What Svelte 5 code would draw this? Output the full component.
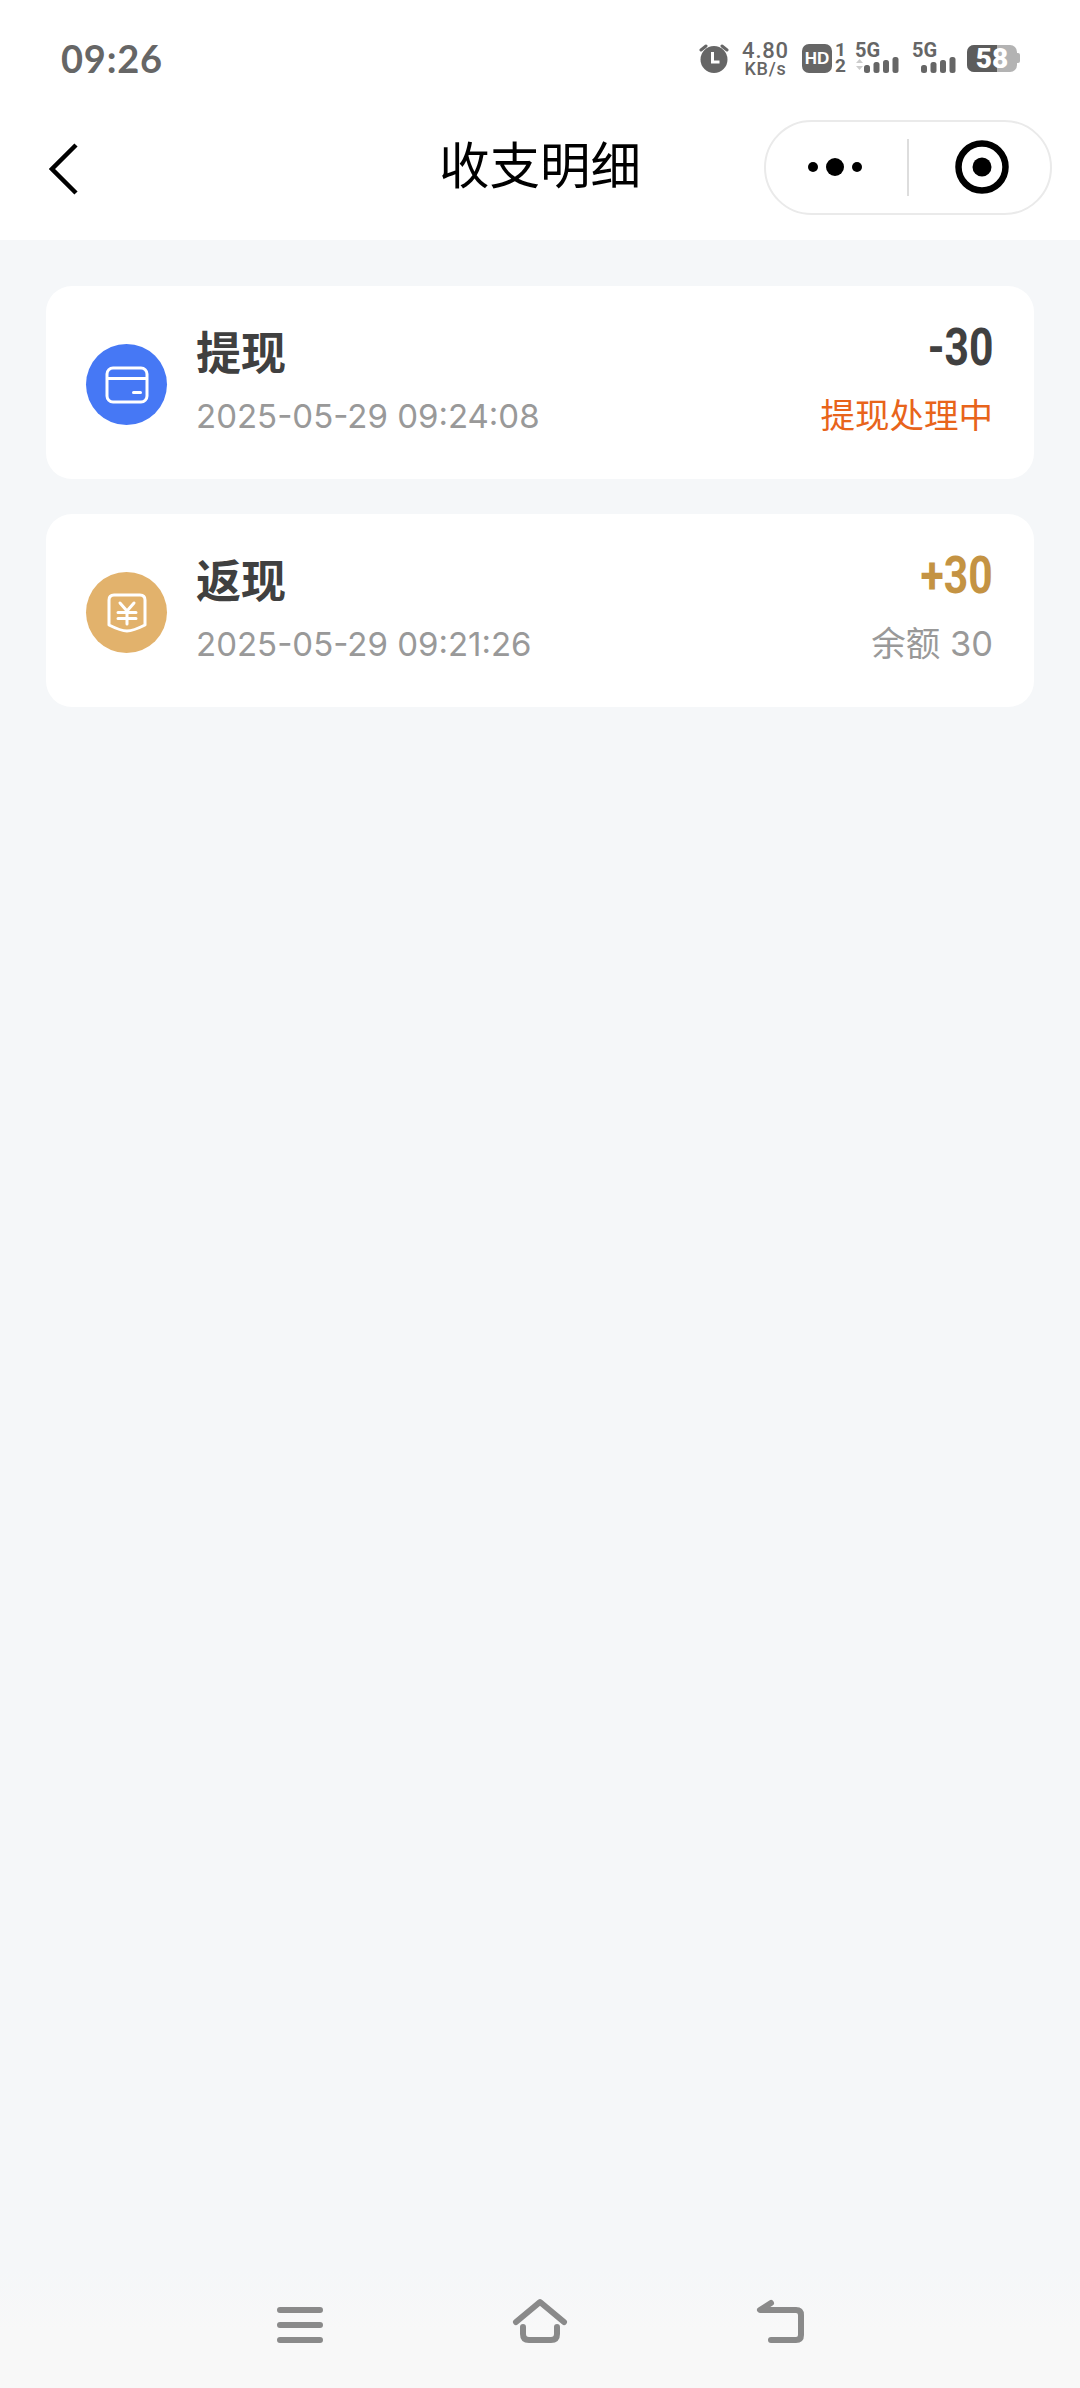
<script>
  const rows = [
    { kind: 'card', title: '提现', time: '2025-05-29 09:24:08', amount: '-30', note: '提现处理中' },
    { kind: 'cash', title: '返现', time: '2025-05-29 09:21:26', amount: '+30', note: '余额 30' },
  ];
  const sims = [0, 1];
</script>

<div class="page">
  <header class="top">
    <div class="status">
      <span class="clock">09:26</span>
      <div class="sys">
        <svg class="alarm" width="30" height="30" viewBox="0 0 30 30">
          <path d="M2 7l5-4M28 7l-5-4" stroke="#666" stroke-width="3" stroke-linecap="round"/>
          <circle cx="15" cy="16.500" r="13.500" fill="#666"/>
          <path d="M13.500 9v10h7" fill="none" stroke="#fff" stroke-width="3"/>
        </svg>
        <div class="speed"><span>4.80</span><span class="unit">KB/s</span></div>
        <div class="hd">HD</div>
        <div class="slots"><span>1</span><span>2</span></div>
        {#each sims as s}
          <div class="sim" class:second={s === 1}>
            <span>5G</span>
            <svg width="44" height="16" viewBox="0 0 44 16">
              {#if s === 0}
                <path d="M1 6l3.500-4 3.500 4zM1 9l3.500 4 3.500-4z" fill="#ccc"/>
              {/if}
              <g fill="#666">
                <rect x="9" y="8" width="6" height="8" rx="2.500"/>
                <rect x="18.500" y="5" width="6" height="11" rx="2.500"/>
                <rect x="28" y="3" width="6" height="13" rx="2.500"/>
                <rect x="37.500" y="0" width="6" height="16" rx="2.500"/>
              </g>
            </svg>
          </div>
        {/each}
        <div class="battery"><div class="cell"><i class="level"></i><b>58</b></div><i class="nub"></i></div>
      </div>
    </div>

    <nav class="bar">
      <svg class="back" width="30" height="54" viewBox="0 0 30 54">
        <path d="M27 3L3 27 27 51" fill="none" stroke="#000" stroke-width="4.500"/>
      </svg>
      <h1>收支明细</h1>
      <div class="capsule">
        <div class="more"><i></i><i class="big"></i><i></i></div>
        <div class="split"></div>
        <svg width="54" height="54" viewBox="0 0 54 54">
          <circle cx="27" cy="27" r="23.500" fill="none" stroke="#000" stroke-width="6.500"/>
          <circle cx="27" cy="27" r="9.500" fill="#000"/>
        </svg>
      </div>
    </nav>
  </header>

  <main class="list">
    {#each rows as r}
      <section class="row">
        <div class="badge {r.kind}">
          {#if r.kind === 'card'}
            <svg width="44" height="38" viewBox="0 0 44 38" fill="none" stroke="#fff" stroke-width="3">
              <rect x="2" y="2" width="40" height="34" rx="6"/>
              <path d="M2 12.500h40"/>
              <path d="M28.500 26.500h7" stroke-linecap="round"/>
            </svg>
          {:else}
            <svg width="40" height="40" viewBox="0 0 40 40" fill="none" stroke="#fff" stroke-width="3">
              <path d="M7 2H33Q38 2 38 7V32C30 36 25 38 20 38S10 36 2 32V7Q2 2 7 2z" stroke-linejoin="round"/>
              <path d="M13 10l7 8 7-8M11 19.500h18M11 25.500h18M20 18v13" stroke-linecap="round" stroke-linejoin="round"/>
            </svg>
          {/if}
        </div>
        <div class="info">
          <div class="name">{r.title}</div>
          <div class="time">{r.time}</div>
        </div>
        <div class="side">
          <div class="amount {r.kind}">{r.amount}</div>
          <div class="note {r.kind}">{r.note}</div>
        </div>
      </section>
    {/each}
  </main>

  <footer class="keys">
    <svg width="50" height="50" viewBox="0 0 50 50" fill="none" stroke="#8a8a8a" stroke-width="6" stroke-linecap="round">
      <path d="M5 13h40M5 28h40M5 43h40"/>
    </svg>
    <svg width="60" height="50" viewBox="0 0 60 50" fill="none" stroke="#8a8a8a" stroke-width="6" stroke-linecap="round" stroke-linejoin="round">
      <path d="M6 25L30 5l24 20"/>
      <path d="M13 30v7q0 6 6 6h22q6 0 6-6v-7"/>
    </svg>
    <svg width="52" height="50" viewBox="0 0 52 50" fill="none" stroke="#8a8a8a" stroke-width="6" stroke-linecap="round" stroke-linejoin="round">
      <path d="M17 6L6 13h36q5 0 5 5v20q0 5-5 5H17"/>
    </svg>
  </footer>
</div>

<style>
  :global(body){background:#f5f7f9}
  .page{height:2388px;display:flex;flex-direction:column;background:#f5f7f9;
    font-family:"Noto Sans","Noto Sans CJK SC",sans-serif;overflow:hidden}

  .top{background:#fff;height:240px;flex:none}
  .status{height:100px;padding:15px 60px 0 61px;box-sizing:border-box;display:flex;align-items:center;justify-content:space-between}
  .clock{font:700 38px/1 Lato,"Noto Sans",sans-serif;color:#666;letter-spacing:.8px}
  .sys{display:flex;align-items:center;color:#666;margin-top:1px}
  .alarm{margin-right:12px}
  .speed{display:flex;flex-direction:column;align-items:center;width:49px;font:500 22px/21px Roboto,sans-serif;letter-spacing:.8px}
  .speed .unit{font-size:18px;line-height:16px}
  .hd{margin-left:12px;width:30px;height:29px;border-radius:7px;background:#666;color:#fff;
    font:800 17px/29px "Liberation Sans",sans-serif;text-align:center}
  .slots{display:flex;flex-direction:column;margin-left:3px;font:700 19px/16px Roboto,sans-serif;width:9px}
  .sim{display:flex;flex-direction:column;margin-left:11px;width:44px}
  .sim.second{margin-left:13px}
  .sim span{font:700 20px/14px Roboto,sans-serif}
  .battery{margin-left:11px;display:flex;align-items:center}
  .cell{position:relative;width:50px;height:27px;border-radius:7px;background:#b3b3b3;
    text-align:center;color:#fff;font:700 28px/27px Roboto,sans-serif}
  .level{position:absolute;left:0;top:0;bottom:0;width:30px;background:#5c5c5c;border-radius:7px 0 0 7px}
  .cell b{position:relative}
  .nub{width:3px;height:10px;background:#b3b3b3;border-radius:0 2px 2px 0}

  .bar{height:140px;display:flex;align-items:center;position:relative;padding:0 28px 6px 49px;box-sizing:border-box}
  .back{margin-top:3px}
  .bar h1{position:absolute;left:0;right:0;top:27px;margin:0;text-align:center;font:400 50.500px/70px "Noto Sans CJK SC",sans-serif;color:#000}
  .capsule{margin-left:auto;width:288px;height:95px;border:2px solid #eaeaea;border-radius:48px;box-sizing:border-box;
    display:flex;align-items:center;position:relative;padding-left:42px}
  .more{display:flex;align-items:center;gap:8px;width:99px}
  .more i{width:10px;height:10px;border-radius:50%;background:#000}
  .more .big{width:18px;height:18px}
  .split{width:2px;height:57px;background:#ddd;margin-right:46px}

  .list{flex:1;padding:46px 46px 0 46px;display:flex;flex-direction:column;gap:35px}
  .row{height:193px;border-radius:26px;background:#fff;display:flex;align-items:center;padding:0 41px 0 40px;box-sizing:border-box}
  .badge{width:81px;height:81px;margin-top:4px;border-radius:50%;display:flex;align-items:center;justify-content:center;flex:none}
  .badge.card{background:#4678f5}
  .badge.cash{background:#e2b26c}
  .info{margin-left:29px;flex:1}
  .name{font:700 45px/60px "Noto Sans CJK SC",sans-serif;color:#404040;margin-top:-7px}
  .time{margin-top:13px;font:400 33px/44px Inter,"Noto Sans",sans-serif;color:#999}
  .side{text-align:right;margin-top:-3px}
  .amount{font:700 52px/60px Roboto,sans-serif;color:#404040;margin-top:-7px;transform:scaleX(.82);transform-origin:right center}
  .amount.cash{color:#c49343}
  .note{margin-top:16px;font:400 34.500px/44px Inter,"Noto Sans CJK SC",sans-serif;color:#e8641b}
  .note.cash{color:#999}

  .keys{height:118px;flex:none;background:linear-gradient(#f5f7f9,#f8f8f8 60px);display:flex;align-items:flex-start;gap:184.500px;padding:27px 0 0 275px;box-sizing:border-box}
</style>
